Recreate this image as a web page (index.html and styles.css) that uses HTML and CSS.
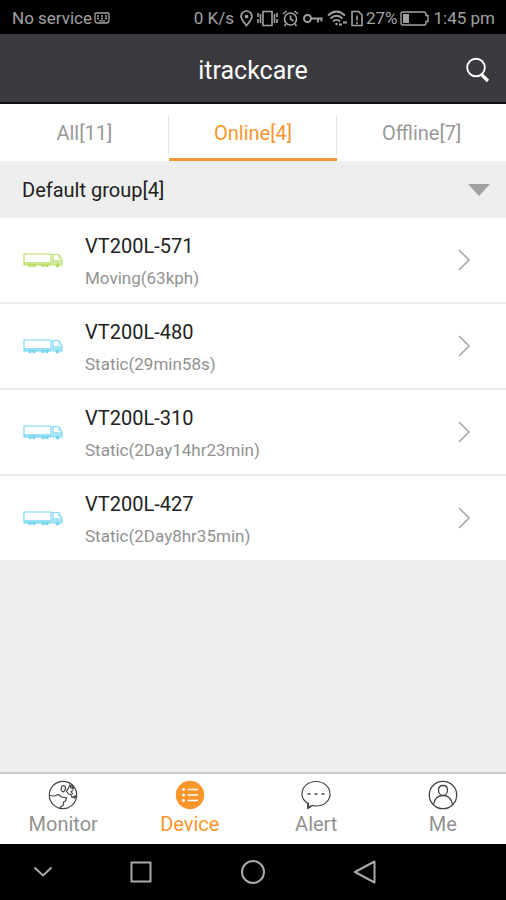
FILE: index.html
```html
<!DOCTYPE html>
<html lang="en">
<head>
<meta charset="utf-8">
<meta name="viewport" content="width=device-width, initial-scale=1">
<title>itrackcare</title>
<link rel="stylesheet" href="styles.css">
</head>
<body>
<svg class="defs" width="0" height="0" aria-hidden="true">
  <symbol id="truck" viewBox="0 0 40 16">
    <path d="M1 2h27v11H1z" fill="none" stroke="currentColor" stroke-width="1.200"/>
    <path d="M1 10h27v3H1z" fill="currentColor" opacity=".75"/>
    <path d="M30 13V2.500h4.500q2 0 3 3l1.500 3v4.500z" fill="none" stroke="currentColor" stroke-width="1.200"/>
    <path d="M30.500 8h8v4.500h-8zM35 3.500l2 3.500h-2z" fill="currentColor" opacity=".65"/>
    <g fill="currentColor"><circle cx="7" cy="13.500" r="1.800"/><circle cx="11" cy="13.500" r="1.800"/><circle cx="20" cy="13.500" r="1.800"/><circle cx="24" cy="13.500" r="1.800"/><circle cx="34.500" cy="13.500" r="2"/></g>
  </symbol>
  <symbol id="chevron" viewBox="0 0 14 24">
    <path d="M2 2l10 10L2 22" fill="none" stroke="currentColor" stroke-width="1.700"/>
  </symbol>
</svg>

<div class="status">
  <span>No service</span>
  <svg class="status-card" width="16" height="12" viewBox="0 0 16 12" fill="none" stroke="currentColor" stroke-width="1.300"><path d="M1 2q0-1 1-1h12q1 0 1 1v6q0 3-3 3H4q-3 0-3-3zM3 4h2M7 4h2M11 4h2M3 6.500h2M7 6.500h2M11 6.500h2M5 8.800h6"/></svg>
  <span class="status-speed">0 K/s</span>
  <div class="status-icons">
    <svg width="13" height="17" viewBox="0 0 13 17" fill="none" stroke="currentColor" stroke-width="1.700"><path d="M6.500 15.500C3 11 1 9 1 6.500a5.500 5.500 0 0 1 11 0c0 2.500-2 4.500-5.500 9z"/><circle cx="6.500" cy="6.500" r="1" fill="currentColor"/></svg>
    <svg width="21" height="17" viewBox="0 0 21 17" fill="none" stroke="currentColor" stroke-width="1.600"><path d="M6 1.500h9v14H6zM3.500 4v9M17.500 4v9M1 3v4M1 9v4M20 3v4M20 9v4"/></svg>
    <svg width="17" height="17" viewBox="0 0 17 17" fill="none" stroke="currentColor" stroke-width="1.600"><circle cx="8.500" cy="9" r="6"/><path d="M8.500 5.500V9l3 2M1 4l3.500-3M16 4l-3.500-3M4 14l-1.500 2M13 14l1.500 2"/></svg>
    <svg width="20" height="17" viewBox="0 0 20 17" fill="none" stroke="currentColor" stroke-width="1.900"><circle cx="4.500" cy="8.500" r="3.500"/><path d="M8 8.500h11.500M15 8.500v4M18.500 8.500v3"/></svg>
    <svg width="20" height="17" viewBox="0 0 20 17" fill="none" stroke="currentColor" stroke-width="1.800"><path d="M1 5.500q8.500-8 17 0M3.500 8.500q6-5.500 12 0M6 11.500q3.500-3.200 7 0"/><circle cx="9.500" cy="14" r="1.200" fill="currentColor" stroke="none"/><path d="M12 14.500h3M16 12.500h4" stroke-width="2"/></svg>
    <svg width="12" height="17" viewBox="0 0 12 17" fill="none" stroke="currentColor" stroke-width="1.600"><path d="M1 1.500h6.500L11 5v10.500H1zM6 5.500v5M6 12v2"/></svg>
  </div>
  <span>27%</span>
  <svg class="status-battery" width="30" height="15" viewBox="0 0 30 15"><path d="M3 1h21q2 0 2 2v1.500h2v6h-2V12q0 2-2 2H3q-2 0-2-2V3q0-2 2-2z" fill="none" stroke="currentColor" stroke-width="1.400"/><path d="M3 3h6v9H3z" fill="currentColor"/></svg>
  <span>1:45 pm</span>
</div>

<header class="header">
  <h1 class="title">itrackcare</h1>
  <button class="search" type="button" aria-label="Search"><svg width="24" height="26" viewBox="0 0 24 26" fill="none" stroke="currentColor"><circle cx="10" cy="10.500" r="8.800" stroke-width="1.900"/><path d="M15.500 17.500l6.500 6.500" stroke-width="3.200"/></svg></button>
</header>

<nav class="tabs">
  <a class="tab" href="#all">All[11]</a>
  <a class="tab tab-active" href="#online" aria-current="page">Online[4]</a>
  <a class="tab" href="#offline">Offline[7]</a>
</nav>

<main class="content">
  <button class="group" type="button"><span>Default group[4]</span><svg width="22" height="12" viewBox="0 0 22 12"><path d="M0 0h22L11 12z" fill="currentColor"/></svg></button>
  <ul class="devices">
    <li><a class="device" href="#571"><svg class="truck truck-moving"><use href="#truck"/></svg><span class="device-text"><span class="device-name">VT200L-571</span><span class="device-state">Moving(63kph)</span></span><svg class="chevron"><use href="#chevron"/></svg></a></li>
    <li><a class="device" href="#480"><svg class="truck"><use href="#truck"/></svg><span class="device-text"><span class="device-name">VT200L-480</span><span class="device-state">Static(29min58s)</span></span><svg class="chevron"><use href="#chevron"/></svg></a></li>
    <li><a class="device" href="#310"><svg class="truck"><use href="#truck"/></svg><span class="device-text"><span class="device-name">VT200L-310</span><span class="device-state">Static(2Day14hr23min)</span></span><svg class="chevron"><use href="#chevron"/></svg></a></li>
    <li><a class="device" href="#427"><svg class="truck"><use href="#truck"/></svg><span class="device-text"><span class="device-name">VT200L-427</span><span class="device-state">Static(2Day8hr35min)</span></span><svg class="chevron"><use href="#chevron"/></svg></a></li>
  </ul>
</main>

<nav class="bottom">
  <a class="bottom-item" href="#monitor">
    <svg width="30" height="30" viewBox="0 0 30 30" fill="none" stroke="#444" stroke-width="1.200"><circle cx="15" cy="15" r="13.700"/><path d="M1.500 15.500l5 .5 4-1.500 3 2.500 5 1-1 3-2 1 0 3-3 2-1 2M14 6q3-1 3.500 1.500T15 12q-2-.5-2-3zM22 4.500L20.500 8l-2 3 2 3 2.500.5 1 3 3.500-1.500M22 5l1 3 3 1M25 10l-2 2 2 2"/><path d="M23.500 5l2.500 3M26 18.500l1.500-3" stroke-width="2"/></svg>
    <span>Monitor</span></a>
  <a class="bottom-item bottom-active" href="#device" aria-current="page">
    <svg width="30" height="30" viewBox="0 0 30 30"><circle cx="15" cy="15" r="14.200" fill="currentColor"/><g fill="#fff"><circle cx="8.500" cy="9.500" r="1.500"/><circle cx="8.500" cy="15" r="1.500"/><circle cx="8.500" cy="20.500" r="1.500"/></g><path d="M12.500 9.500H23M12.500 15H23M12.500 20.500H23" stroke="#fff" stroke-width="1.500"/></svg>
    <span>Device</span></a>
  <a class="bottom-item" href="#alert">
    <svg width="30" height="30" viewBox="0 0 30 30" fill="none" stroke="#444" stroke-width="1.200"><path d="M7 23.500C3 21 1 17.500 1 14 1 7 7 1.500 15 1.500S29 7 29 14s-6 12-14 12q-2 0-3.500-.5L7 28z"/><path d="M7 22.500V28l3-2" stroke-width="1.600"/><path d="M6.500 14h3M13.500 14h3M20.500 14h3" stroke-width="1.600"/></svg>
    <span>Alert</span></a>
  <a class="bottom-item" href="#me">
    <svg width="30" height="30" viewBox="0 0 30 30" fill="none" stroke="#444" stroke-width="1.300"><circle cx="15" cy="15" r="13.700"/><path d="M15 5.500c3 0 4.500 2 4.500 4.500s-1.500 5.500-4.500 5.500-4.500-3-4.500-5.500S12 5.500 15 5.500zM5.500 24.500c1-5.500 4.500-9 9.500-9s8.500 3.500 9.500 9"/></svg>
    <span>Me</span></a>
</nav>

<div class="system">
  <button type="button" aria-label="Hide bar"><svg width="24" height="24" viewBox="0 0 24 24" fill="none" stroke="currentColor" stroke-width="2"><path d="M3.500 7.500l8.500 8 8.500-8"/></svg></button>
  <button type="button" aria-label="Recents"><svg width="24" height="24" viewBox="0 0 24 24" fill="none" stroke="currentColor" stroke-width="2"><path d="M2.500 2.500h19v19h-19z"/></svg></button>
  <button type="button" aria-label="Home"><svg width="24" height="24" viewBox="0 0 24 24" fill="none" stroke="currentColor" stroke-width="2"><circle cx="12" cy="12" r="11"/></svg></button>
  <button type="button" aria-label="Back"><svg width="24" height="24" viewBox="0 0 24 24" fill="none" stroke="currentColor" stroke-width="2" stroke-linejoin="round"><path d="M21.500 1.500v21L2 12z"/></svg></button>
</div>
</body>
</html>
```
FILE: styles.css
```css
* {
  box-sizing: border-box;
}

body {
  display: flex;
  flex-direction: column;
  min-height: 100vh;
  margin: 0;
  background: #eee;
  color: #222;
  font-family: Roboto, "Liberation Sans", sans-serif;
}

a {
  color: inherit;
  text-decoration: none;
}

button {
  padding: 0;
  border: 0;
  background: none;
  color: inherit;
  font: inherit;
}

svg {
  display: block;
  flex: none;
}

.defs {
  position: absolute;
}

.status {
  display: flex;
  align-items: center;
  padding: 2px 11px 0 12px;
  height: 34px;
  background: #000;
  color: #a2a2a2;
  font-size: 17px;
  white-space: nowrap;
}

.status-card {
  margin-left: 2px;
}

.status-speed {
  margin-left: auto;
}

.status-icons {
  display: flex;
  gap: 4px;
  margin: 0 3px 0 6px;
}

.status-battery {
  margin: 0 4px 0 2px;
}

.header {
  display: grid;
  grid-template-columns: 1fr auto 1fr;
  align-items: center;
  height: 70px;
  padding: 4px 16px 0;
  border-bottom: 2px solid #111116;
  background: #3b3a3e;
  color: #fff;
}

.title {
  grid-column: 2;
  margin: 0;
  font-size: 25px;
  font-weight: 400;
}

.search {
  justify-self: end;
}

.tabs {
  display: grid;
  grid-template-columns: repeat(3, 1fr);
  height: 57px;
  background: #fff;
  color: #999;
  font-size: 20px;
}

.tab {
  display: flex;
  align-items: center;
  justify-content: center;
  border-top: 3px solid transparent;
  border-bottom: 3px solid transparent;
  background: linear-gradient(#e8e8e8, #e8e8e8) right 8px / 1px 40px no-repeat;
}

.tab:last-child {
  background: none;
}

.tab-active {
  border-bottom-color: #f19835;
  color: #f7962d;
}

.content {
  flex: 1;
}

.group {
  display: flex;
  align-items: center;
  justify-content: space-between;
  width: 100%;
  height: 57px;
  padding: 0 16px 0 22px;
  font-size: 20px;
}

.group svg {
  color: #a0a0a0;
}

.devices {
  margin: 0;
  padding: 0;
  background: #fff;
  list-style: none;
}

.devices li + li {
  border-top: 2px solid #ececec;
}

.device {
  display: flex;
  align-items: center;
  height: 84px;
  padding: 0 35px 0 23px;
}

.truck {
  width: 40px;
  height: 16px;
  color: #76d6f2;
}

.truck-moving {
  color: #b9de66;
}

.device-text {
  display: flex;
  flex: 1;
  flex-direction: column;
  gap: 8px;
  margin-left: 22px;
  padding-top: 4px;
}

.device-name {
  font-size: 20px;
  line-height: 24px;
}

.device-state {
  color: #929292;
  font-size: 17px;
  line-height: 24px;
}

.chevron {
  width: 14px;
  height: 24px;
  color: #aaa;
}

.bottom {
  display: grid;
  grid-template-columns: repeat(4, 1fr);
  height: 72px;
  border-top: 2px solid #c8c8c8;
  background: #fff;
  color: #929292;
  font-size: 20px;
  line-height: 24px;
}

.bottom-item {
  display: flex;
  flex-direction: column;
  align-items: center;
  gap: 2px;
  padding-top: 6px;
}

.bottom-active {
  color: #fb962b;
}

.system {
  display: grid;
  grid-template-columns: 1fr repeat(3, 112px) 1fr;
  place-items: center;
  height: 56px;
  background: #000;
  color: #aaa;
}
```
